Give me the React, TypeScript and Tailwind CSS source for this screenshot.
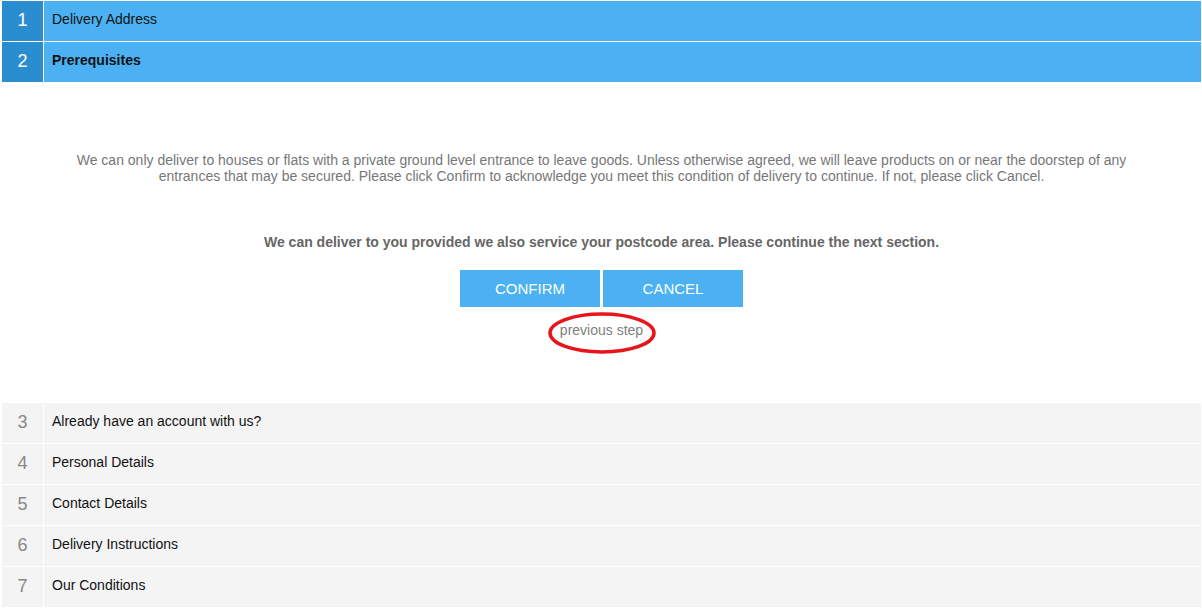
import React from 'react';

const lowerSteps = [
  { n: 3, label: 'Already have an account with us?' },
  { n: 4, label: 'Personal Details' },
  { n: 5, label: 'Contact Details' },
  { n: 6, label: 'Delivery Instructions' },
  { n: 7, label: 'Our Conditions' },
];

function ActiveStep({ n, label, bold }: { n: number; label: string; bold?: boolean }) {
  return (
    <div className="flex h-10 mb-px">
      <div className="w-[41px] shrink-0 bg-[#2a8dd0] text-white text-[18px] flex items-center justify-center pb-px border-r border-white box-content">
        {n}
      </div>
      <div className={`flex-1 bg-[#4bb1f2] flex items-center pl-2 pb-[3px] text-[14px] text-[#111] ${bold ? 'font-bold' : ''}`}>
        {label}
      </div>
    </div>
  );
}

export default function App() {
  return (
    <div
      className="w-[1202px] h-[610px] bg-white pt-px pl-[2px] pr-px overflow-hidden"
      style={{ fontFamily: '"Liberation Sans", Arial, sans-serif' }}
    >
      <ActiveStep n={1} label="Delivery Address" />
      <ActiveStep n={2} label="Prerequisites" bold />

      <div className="h-[320px] flex flex-col items-center pt-[69px]">
        <p className="px-[66px] text-center text-[14px] leading-4 text-[#777]">
          We can only deliver to houses or flats with a private ground level entrance to leave goods. Unless otherwise agreed, we will leave products on or near the doorstep of any entrances that may be secured. Please click Confirm to acknowledge you meet this condition of delivery to continue. If not, please click Cancel.
        </p>
        <p className="mt-[50px] text-[14px] leading-4 font-bold text-[#666]">
          We can deliver to you provided we also service your postcode area. Please continue the next section.
        </p>
        <div className="mt-5 flex gap-[3px]">
          <button className="w-[140px] h-[37px] pt-px bg-[#4bb1f2] text-white text-[15px]">CONFIRM</button>
          <button className="w-[140px] h-[37px] pt-px bg-[#4bb1f2] text-white text-[15px]">CANCEL</button>
        </div>
        <div className="relative mt-[15px] text-[14px] leading-4 text-[#808080]">
          previous step
          <svg
            className="absolute left-1/2 top-[calc(50%+3px)] -translate-x-1/2 -translate-y-1/2 pointer-events-none"
            width="112"
            height="46"
            viewBox="0 0 112 46"
          >
            <ellipse cx="56" cy="23" rx="52" ry="19" fill="none" stroke="#e8141c" strokeWidth="3.5" />
          </svg>
        </div>
      </div>

      {lowerSteps.map((s) => (
        <div key={s.n} className="flex h-10 mb-px">
          <div className="w-[41px] shrink-0 bg-[#f4f4f4] text-[#888] text-[18px] flex items-center justify-center pb-px border-r border-white box-content">
            {s.n}
          </div>
          <div className="flex-1 bg-[#f4f4f4] flex items-center pl-2 pb-[3px] text-[14px] text-[#111]">{s.label}</div>
        </div>
      ))}
    </div>
  );
}
